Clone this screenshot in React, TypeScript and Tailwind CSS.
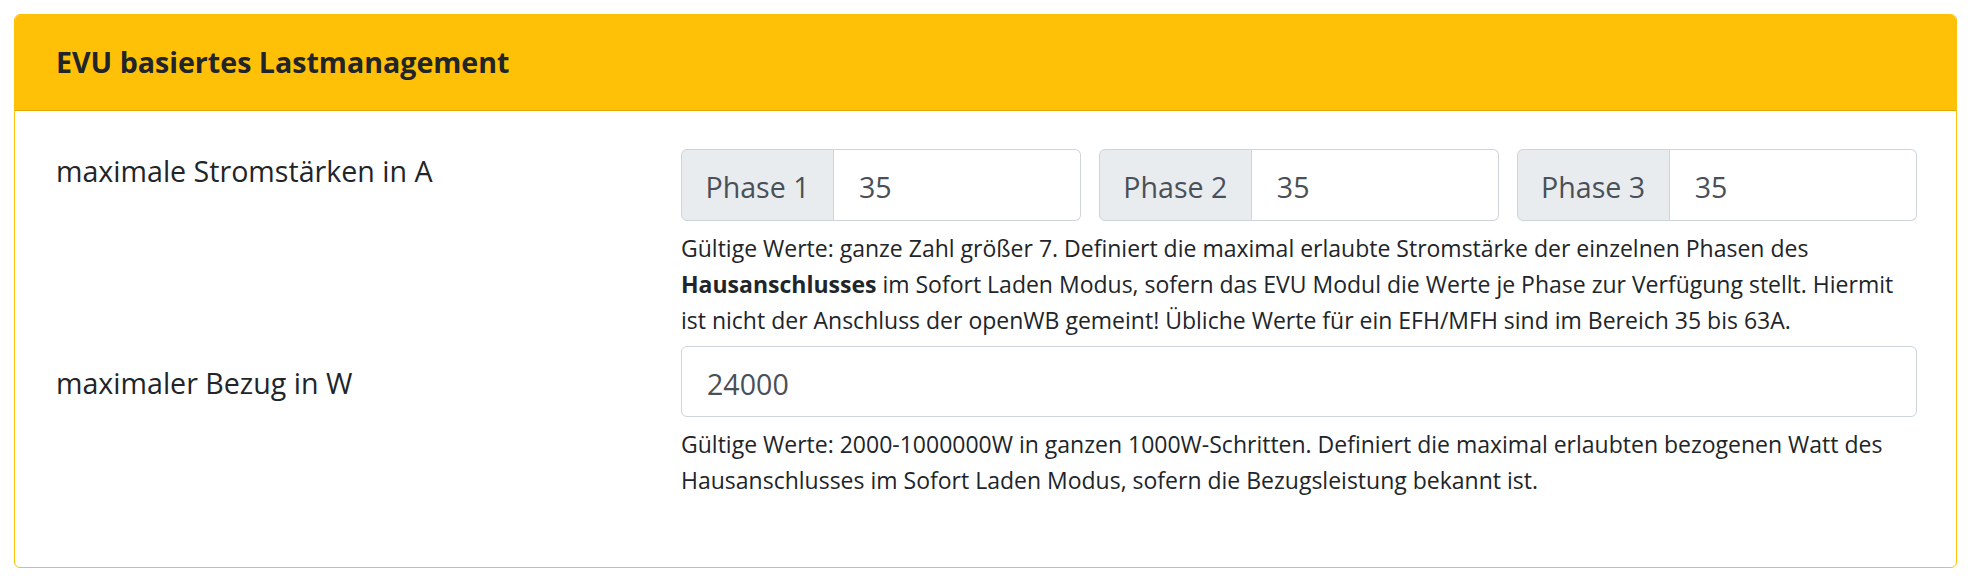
import React from 'react';

const font = { fontFamily: '"Open Sans", "Noto Sans", sans-serif' };

interface PhaseInputProps {
  label: string;
  value: string;
}

const PhaseInput: React.FC<PhaseInputProps> = ({ label, value }) => (
  <div className="flex h-[72px] w-full">
    <span className="flex w-[153px] shrink-0 items-center justify-center rounded-l-[6px] border border-[#ced4da] bg-[#e9ecef] pt-[4px] text-[#495057]">
      {label}
    </span>
    <input
      type="text"
      value={value}
      readOnly
      className="min-w-0 flex-1 rounded-r-[6px] border border-l-0 border-[#ced4da] bg-white pl-[25px] pt-[4px] text-[#495057] outline-none"
    />
  </div>
);

export default function App() {
  return (
    <div className="min-h-[585px] bg-white pt-[14px]" style={font}>
      <div className="ml-[14px] w-[1943px] overflow-hidden rounded-[6px] border border-[#ffc107] text-[28.6px] leading-[1.5] text-[#212529]">
        {/* Header */}
        <div className="flex h-[96px] items-center border-b border-[#e0a800] bg-[#ffc107] px-[41px]">
          <span className="font-bold">EVU basiertes Lastmanagement</span>
        </div>

        {/* Body */}
        <div className="pl-[41px] pr-[39px] pb-[69px] pt-[38px]">
          {/* Row 1 */}
          <div className="grid grid-cols-[625px_1fr]">
            <div className="pt-[1px]">maximale Stromstärken in A</div>
            <div>
              <div className="grid grid-cols-3 gap-[17.5px]">
                <PhaseInput label="Phase 1" value="35" />
                <PhaseInput label="Phase 2" value="35" />
                <PhaseInput label="Phase 3" value="35" />
              </div>
              <p className="mt-[9px] whitespace-nowrap text-[23px] leading-[36px]">
                Gültige Werte: ganze Zahl größer 7. Definiert die maximal erlaubte Stromstärke der einzelnen Phasen des
                <br />
                <b>Hausanschlusses</b> im Sofort Laden Modus, sofern das EVU Modul die Werte je Phase zur Verfügung stellt. Hiermit
                <br />
                ist nicht der Anschluss der openWB gemeint! Übliche Werte für ein EFH/MFH sind im Bereich 35 bis 63A.
              </p>
            </div>
          </div>

          {/* Row 2 */}
          <div className="mt-[8px] grid grid-cols-[625px_1fr]">
            <div className="pt-[16px]">maximaler Bezug in W</div>
            <div>
              <input
                type="text"
                value="24000"
                readOnly
                className="block h-[71px] w-full rounded-[6px] border border-[#ced4da] bg-white pl-[25px] pt-[4px] text-[#495057] outline-none"
              />
              <p className="mt-[9px] whitespace-nowrap text-[23px] leading-[36px]">
                Gültige Werte: 2000-1000000W in ganzen 1000W-Schritten. Definiert die maximal erlaubten bezogenen Watt des
                <br />
                Hausanschlusses im Sofort Laden Modus, sofern die Bezugsleistung bekannt ist.
              </p>
            </div>
          </div>
        </div>
      </div>
    </div>
  );
}
